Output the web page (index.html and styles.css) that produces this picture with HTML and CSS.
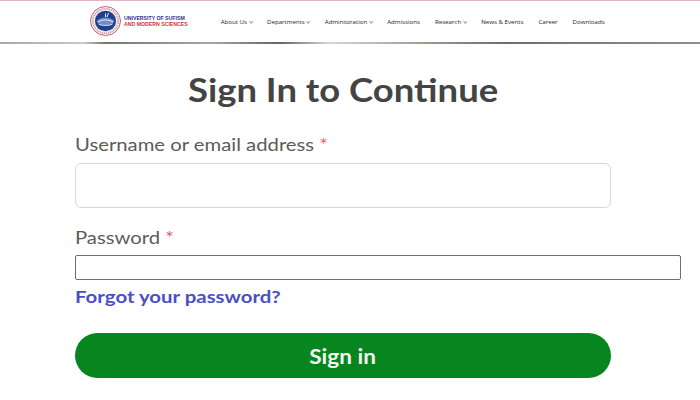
FILE: index.html
```html
<!DOCTYPE html>
<html lang="en">
<head>
<meta charset="utf-8">
<title>Sign In</title>
<link rel="stylesheet" href="styles.css">
</head>
<body>
<header class="site-header">
  <a class="brand" href="#">
    <svg class="logo" width="31" height="30" viewBox="0 0 31 30" aria-hidden="true">
      <ellipse cx="15.5" cy="15" rx="15" ry="14.5" fill="#f4eef0" stroke="#c9607a" stroke-width="1"/>
      <ellipse cx="15.5" cy="15" rx="12.6" ry="12.2" fill="none" stroke="#c98a9c" stroke-width="1.6" stroke-dasharray="1 1"/>
      <ellipse cx="15.5" cy="15" rx="10.6" ry="10.2" fill="#1f3f8f"/>
      <path d="M6.5 15c3-3 6-3.5 9-3.5s6 .5 9 3.5c-2 3.5-5.500 4.500-9 4.500s-7-1-9-4.500z" fill="#6f8fc4"/>
      <path d="M8 16c2.500-1.500 5-2 7.500-2s5 .5 7.500 2" fill="none" stroke="#e6ecf6" stroke-width="1"/>
      <path d="M8.500 18c2 1 4.500 1.500 7 1.500s5-.5 7-1.500" fill="none" stroke="#dfe6f3" stroke-width="1"/>
      <path d="M15.500 11V7.500M17 11l1.500-4" fill="none" stroke="#e6ecf6" stroke-width="1"/>
    </svg>
    <span class="brand-text">
      <span class="brand-top">UNIVERSITY OF SUFISM</span>
      <span class="brand-bottom">AND MODERN SCIENCES</span>
    </span>
  </a>
  <nav class="nav">
    <a href="#">About Us<i class="caret"></i></a>
    <a href="#">Departments<i class="caret"></i></a>
    <a href="#">Administration<i class="caret"></i></a>
    <a href="#">Admissions</a>
    <a href="#">Research<i class="caret"></i></a>
    <a href="#">News &amp; Events</a>
    <a href="#">Career</a>
    <a href="#">Downloads</a>
  </nav>
</header>
<main class="content">
  <div class="title-row"><h1 class="title">Sign In to Continue</h1></div>
  <form class="form">
    <label class="label label-user" for="user">Username or email address <span class="req">*</span></label>
    <input class="input-soft" id="user" type="text">
    <label class="label label-pass" for="pass">Password <span class="req">*</span></label>
    <input class="input-plain" id="pass" type="password">
    <a class="forgot" href="#">Forgot your password?</a>
    <button class="submit" type="button"><span class="submit-text">Sign in</span></button>
  </form>
</main>
</body>
</html>
```

FILE: styles.css
```css
* { box-sizing: border-box; }
html, body { margin: 0; height: 400px; overflow: hidden; background: #fff; }
body { font-family: Lato, "Liberation Sans", sans-serif; }

.site-header {
  position: relative;
  height: 44px;
  display: flex;
  align-items: center;
  padding: 0 0 3px 90px;
  border-top: 1px solid #e3b4c1;
}
.site-header::after {
  content: "";
  position: absolute;
  left: 0;
  right: 0;
  bottom: 0;
  height: 2px;
  background: linear-gradient(90deg, #a9a9a4 0, #c9c9c4 12%, #77766a 15%, #a9a89c 30%, #66655a 40%, #d6d6d0 47%, #a19f92 60%, #6f6e66 72%, #8f8f8a 100%);
}
.brand { display: flex; align-items: center; gap: 3px; text-decoration: none; }
.logo { display: block; }
.brand-text { display: flex; flex-direction: column; font-family: "Liberation Sans", sans-serif; font-size: 5.200px; font-weight: 700; line-height: 6.500px; white-space: nowrap; }
.brand-top { color: #2c2f8f; }
.brand-bottom { color: #d3333f; }

.nav { display: flex; align-items: center; gap: 15px; margin-left: 33px; font-family: "Open Sans", sans-serif; font-size: 6.150px; }
.nav a { color: #222; text-decoration: none; white-space: nowrap; }
.caret { display: inline-block; width: 2.500px; height: 2.500px; margin: 0 0 1.500px 2.500px; border-right: .6px solid #999; border-bottom: .6px solid #999; transform: rotate(45deg); }

.content { width: 700px; padding-left: 75px; }
.title-row { width: 536px; margin-top: 26px; display: flex; justify-content: center; }
.title { margin: 0; font-size: 32px; line-height: 40px; font-weight: 700; color: #444; transform: scaleX(1.14); white-space: nowrap; }
.form { display: flex; flex-direction: column; align-items: flex-start; }
.label { font-size: 17.500px; line-height: 22px; color: #5c5c57; transform: scaleX(1.158); transform-origin: left center; white-space: nowrap; }
.label-user { margin-top: 24px; }
.label-pass { margin-top: 19px; }
.req { color: #e0606a; }
.input-soft { width: 536px; height: 45px; margin-top: 7px; border: 1px solid #d8d8d8; border-radius: 6px; background: #fff; }
.input-plain { width: 606px; height: 25px; margin-top: 6px; border: 1px solid #6f6f6f; border-radius: 2px; background: #fff; }
.forgot { margin-top: 6px; font-size: 17.500px; line-height: 22px; font-weight: 700; color: #4a4fc4; text-decoration: none; transform: scaleX(1.165); transform-origin: left center; white-space: nowrap; }
.submit { width: 536px; height: 45px; margin-top: 25px; border: 0; border-radius: 23px; background: #07851f; color: #f2f7f2; font: 700 20px/24px Lato, sans-serif; }
.submit-text { display: inline-block; transform: scaleX(1.13); }
```
